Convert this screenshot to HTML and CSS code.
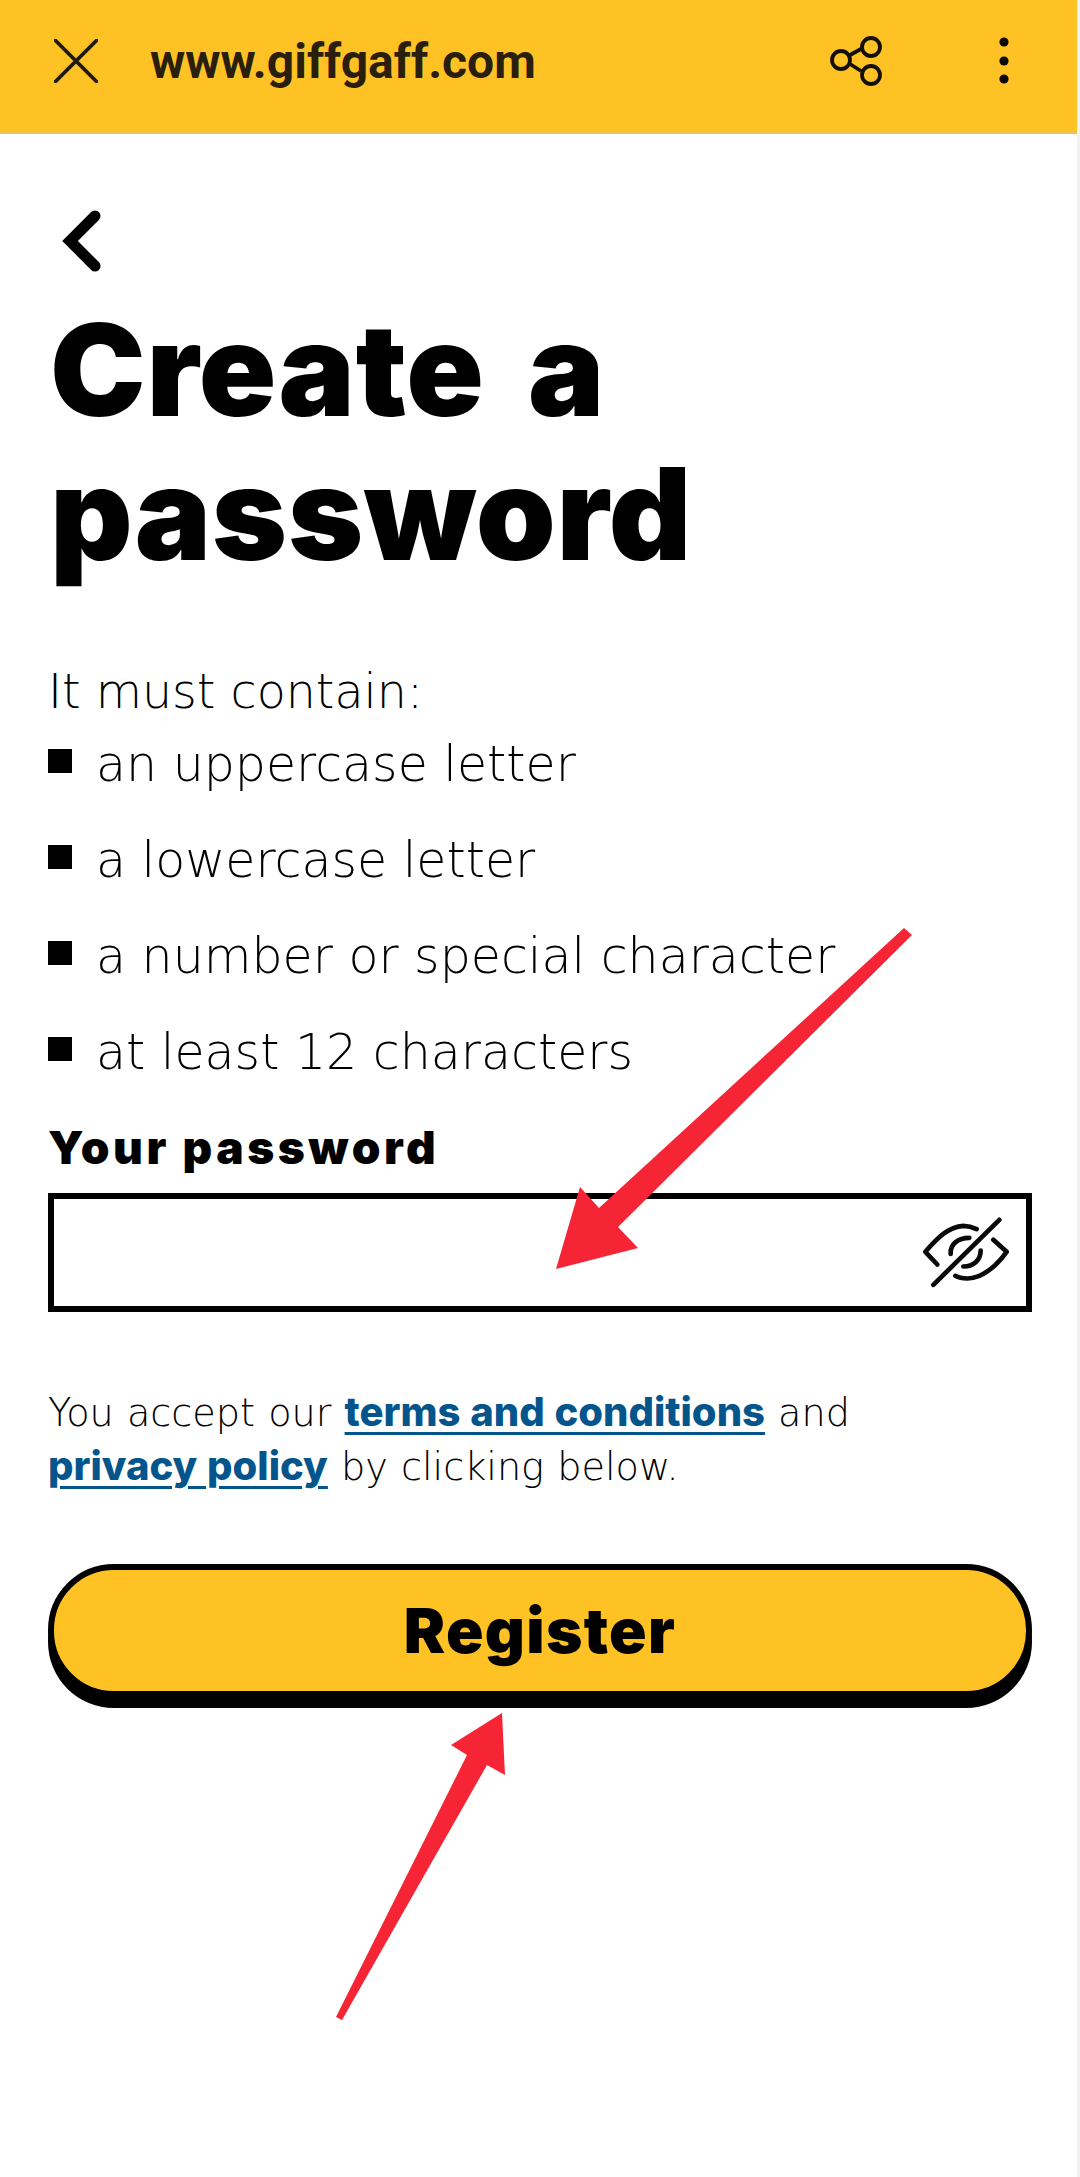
FILE: index.html
```html
<!DOCTYPE html>
<html>
<head>
  <title>Create a password</title>
  <meta charset="UTF-8">
  <link rel="stylesheet" href="styles.css">
</head>

<body>
  <div class="pageDiv">
    <div class="topBar">
      <svg class="closeIcon" width="44" height="44" viewBox="0 0 44 44">
        <path d="M1.5 1.5 L42.5 42.5 M42.5 1.5 L1.5 42.5" fill="none" stroke="#1f1a0c" stroke-width="3.8" stroke-linecap="round"/>
      </svg>
      <span class="urlText">www.giffgaff.com</span>
      <svg class="shareIcon" width="54" height="54" viewBox="0 0 54 54">
        <g fill="none" stroke="#140f05" stroke-width="3.8">
          <path d="M20 21 L31 15 M20 30 L31 37"/>
          <circle cx="11" cy="26" r="9"/>
          <circle cx="41" cy="13" r="9"/>
          <circle cx="41" cy="41" r="9"/>
        </g>
      </svg>
      <svg class="moreIcon" width="10" height="48" viewBox="0 0 10 48">
        <circle cx="5" cy="5" r="4.6" fill="#0c0a05"/>
        <circle cx="5" cy="24" r="4.6" fill="#0c0a05"/>
        <circle cx="5" cy="42" r="4.6" fill="#0c0a05"/>
      </svg>
    </div>

    <div class="mainDiv">
      <svg class="backIcon" width="40" height="62" viewBox="0 0 40 62">
        <path d="M33 6 L8 31 L33 56" fill="none" stroke="#000" stroke-width="11" stroke-linecap="round"/>
      </svg>
      <h1>Create a<br>password</h1>

      <p class="introText">It must contain:</p>
      <ul class="ruleList">
        <li>an uppercase letter</li>
        <li>a lowercase letter</li>
        <li>a number or special character</li>
        <li>at least 12 characters</li>
      </ul>

      <label class="fieldLabel">Your password</label>
      <div class="passwordField">
        <svg class="eyeIcon" width="90" height="80" viewBox="120 67.5 270 240">
          <g fill="none" stroke="#0a0a0a" stroke-width="14" stroke-linecap="round" stroke-linejoin="round">
            <path d="M160 283 L358 88"/>
            <path d="M172 222 L136 184 C170 145 205 108 250 106 C265 106 278 110 290 116"/>
            <path d="M340 148 L380 184 C350 225 310 262 262 264 C248 264 236 262 226 256"/>
            <path d="M268 142 C235 142 210 160 212 190"/>
            <path d="M302 180 C302 210 280 228 250 228"/>
          </g>
        </svg>
      </div>

      <p class="termsText">You accept our <a class="termsLink">terms and conditions</a> and<br><a class="termsLink">privacy policy</a> by clicking below.</p>

      <button class="registerButton">Register</button>
    </div>

    <!-- annotation arrows drawn over the page -->
    <svg class="arrowLayer" width="1080" height="2177" viewBox="0 0 1080 2177">
      <path d="M904 928 L912 935 L618 1227 L638 1248 L556 1269 L580 1187 L599 1208 Z" fill="#f62535"/>
      <path d="M336 2017 L342 2020 L487 1765 L505 1775 L502 1713 L451 1745 L467 1755 Z" fill="#f62535"/>
    </svg>
  </div>
</body>

</html>
```

FILE: styles.css
```css
body {
  margin: 0;
  background-color: white;
  font-family: "Inter", "Liberation Sans", sans-serif;
  color: black;
}
.pageDiv {
  position: relative;
  width: 1077px;
  height: 2177px;
  border-right: 3px solid #f1f1f1;
  overflow: hidden;
}
.topBar {
  display: flex;
  align-items: flex-start;
  height: 132px;
  background-color: #fec225;
  border-bottom: 2px solid #e3c268;
}
.closeIcon {
  margin: 39px 0 0 54px;
}
.urlText {
  margin: 35px 0 0 52px;
  font-family: "Roboto", "Liberation Sans", sans-serif;
  font-size: 48px;
  line-height: 54px;
  font-weight: 700;
  color: #2a1f0c;
}
.shareIcon {
  margin: 34px 0 0 auto;
}
.moreIcon {
  margin: 37px 68px 0 115px;
}
.mainDiv {
  padding: 76px 45px 0 48px;
}
.backIcon {
  display: block;
  margin-left: 14px;
}
h1 {
  margin: 26px 0 0 2px;
  font-size: 128px;
  line-height: 144px;
  font-weight: 900;
  letter-spacing: 0.8px;
  word-spacing: 17px;
}
.introText {
  margin: 74px 0 0 0;
  font-family: "DejaVu Sans", "Inter", sans-serif;
  font-size: 47.5px;
  line-height: 64px;
  font-weight: 200;
}
.ruleList {
  margin: 9px 0 0 0;
  padding: 0;
  list-style: none;
}
.ruleList li {
  display: flex;
  align-items: flex-start;
  gap: 24px;
  height: 96px;
  font-family: "DejaVu Sans", "Inter", sans-serif;
  font-size: 49px;
  line-height: 64px;
  font-weight: 200;
}
.ruleList li::before {
  content: "";
  flex: none;
  width: 24px;
  height: 24px;
  margin-top: 16px;
  background-color: black;
}
.fieldLabel {
  display: block;
  margin-top: 0;
  font-size: 46px;
  line-height: 60px;
  font-weight: 900;
  letter-spacing: 3.5px;
}
.passwordField {
  display: flex;
  align-items: center;
  justify-content: flex-end;
  box-sizing: border-box;
  height: 119px;
  margin-top: 16px;
  padding-right: 16px;
  border: 6px solid black;
}
.termsText {
  margin: 74px 0 0 0;
  font-family: "DejaVu Sans", "Inter", sans-serif;
  font-size: 38.2px;
  line-height: 54px;
  font-weight: 200;
  word-spacing: 1px;
}
.termsLink {
  font-family: "Inter", sans-serif;
  font-size: 40px;
  line-height: 40px;
  color: #03558c;
  font-weight: 800;
  text-decoration: underline;
  text-decoration-thickness: 3px;
  text-underline-offset: 6px;
}
.registerButton {
  display: block;
  box-sizing: border-box;
  width: 100%;
  height: 133px;
  margin-top: 70px;
  border: 6px solid black;
  border-radius: 66px;
  background-color: #fec225;
  box-shadow: 0 11px 0 black;
  font-family: inherit;
  font-size: 62px;
  font-weight: 900;
  letter-spacing: 1.3px;
  color: black;
}
.arrowLayer {
  position: absolute;
  top: 0;
  left: 0;
}
```
